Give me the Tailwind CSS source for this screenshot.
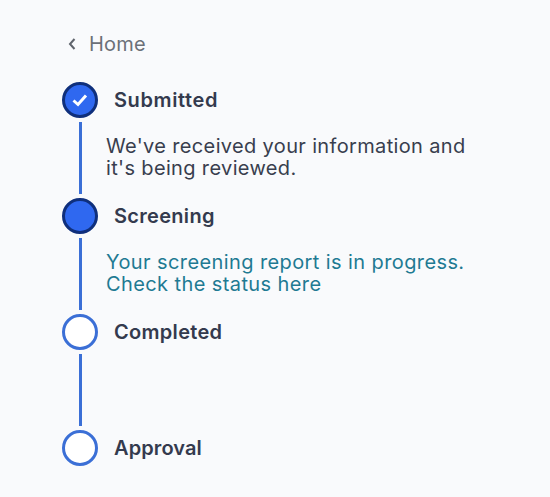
<!DOCTYPE html>
<html lang="en">
  <head>
    <meta charset="UTF-8" />
    <meta name="viewport" content="width=device-width, initial-scale=1.0" />
    <title>Application status</title>
    <script src="https://cdn.jsdelivr.net/npm/@tailwindcss/browser@4"></script>
  </head>

  <body class="bg-[#f9fafc] font-['Inter',sans-serif] w-[550px] h-[497px] overflow-hidden">
    <main class="pl-[62px] pt-[32px]">
      <!-- Back link -->
      <a href="#" class="flex items-center h-[24px] pl-[5px] text-[20px] tracking-[0.2px] text-[#6b7078]">
        <svg class="w-[11px] h-[16px] mr-[11px]" viewBox="0 0 11 16" fill="none" stroke="#5f646c" stroke-width="2">
          <path d="M7.5 3 L3 8 L7.5 13" />
        </svg>
        Home
      </a>

      <ol class="mt-[26px]">
        <!-- Submitted -->
        <li class="flex h-[116px]">
          <div class="flex flex-col items-center w-[36px]">
            <span class="flex items-center justify-center w-[36px] h-[36px] shrink-0 rounded-full bg-[#2f68f0] border-[3px] border-[#0f2f7c]">
              <svg class="w-[20px] h-[20px]" viewBox="0 0 20 20" fill="none" stroke="#fff" stroke-width="3">
                <path d="M3.5 10.5 L8 14.5 L16 5.5" />
              </svg>
            </span>
            <span class="w-[3px] h-[72px] mt-[4px] bg-[#3b6fd6]"></span>
          </div>
          <div class="ml-[8px]">
            <h2 class="ml-[8px] h-[36px] leading-[36px] text-[20px] tracking-[0.6px] font-semibold text-[#343a4e]">Submitted</h2>
            <p class="mt-[17px] text-[20px] tracking-[0.35px] leading-[22px] text-[#383e4e]">We've received your information and<br />it's being reviewed.</p>
          </div>
        </li>

        <!-- Screening -->
        <li class="flex h-[116px]">
          <div class="flex flex-col items-center w-[36px]">
            <span class="w-[36px] h-[36px] shrink-0 rounded-full bg-[#2f68f0] border-[3px] border-[#0f2f7c]"></span>
            <span class="w-[3px] h-[72px] mt-[4px] bg-[#3b6fd6]"></span>
          </div>
          <div class="ml-[8px]">
            <h2 class="ml-[8px] h-[36px] leading-[36px] text-[20px] tracking-[0.3px] font-semibold text-[#343a4e]">Screening</h2>
            <p class="mt-[17px] text-[20px] tracking-[0.4px] leading-[22px] text-[#1f7a93]">Your screening report is in progress.<br />Check the status here</p>
          </div>
        </li>

        <!-- Completed -->
        <li class="flex h-[116px]">
          <div class="flex flex-col items-center w-[36px]">
            <span class="w-[36px] h-[36px] shrink-0 rounded-full bg-white border-[3px] border-[#3b6fd6]"></span>
            <span class="w-[3px] h-[72px] mt-[4px] bg-[#3b6fd6]"></span>
          </div>
          <h2 class="ml-[16px] h-[36px] leading-[36px] text-[20px] tracking-[0.3px] font-semibold text-[#343a4e]">Completed</h2>
        </li>

        <!-- Approval -->
        <li class="flex">
          <span class="w-[36px] h-[36px] shrink-0 rounded-full bg-white border-[3px] border-[#3b6fd6]"></span>
          <h2 class="ml-[16px] h-[36px] leading-[36px] text-[20px] tracking-[0.1px] font-semibold text-[#343a4e]">Approval</h2>
        </li>
      </ol>
    </main>
  </body>
</html>
